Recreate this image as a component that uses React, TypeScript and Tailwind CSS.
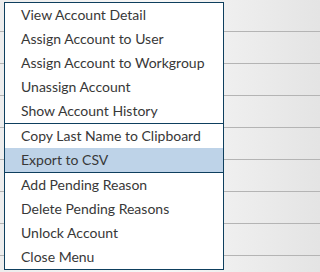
import React from 'react'

const groups: string[][] = [
  [
    'View Account Detail',
    'Assign Account to User',
    'Assign Account to Workgroup',
    'Unassign Account',
    'Show Account History',
  ],
  ['Copy Last Name to Clipboard', 'Export to CSV'],
  ['Add Pending Reason', 'Delete Pending Reasons', 'Unlock Account', 'Close Menu'],
]

const ACTIVE = 'Export to CSV'

export default function App() {
  return (
    <div className="relative w-full min-w-[229px] h-[272px] overflow-hidden bg-[#f3f3f3] font-['Lato',sans-serif]">
      {/* table rows behind the menu */}
      <div className="flex flex-col">
        {Array.from({ length: 9 }).map((_, i) => (
          <div
            key={i}
            className="h-[32px] border-b border-[#b4b4b4] bg-gradient-to-r from-[#ededed] via-[#f7f7f7] to-[#e4e4e4]"
          />
        ))}
      </div>

      {/* context menu */}
      <div className="absolute left-[4px] top-[2px] w-[220px] border border-[#0e3f5e] bg-white text-[14px] leading-[23px] text-[#383838]">
        {groups.map((g, gi) => (
          <div key={gi} className={gi > 0 ? 'border-t border-[#0e3f5e]' : ''}>
            {g.map((label) => (
              <div
                key={label}
                className={`h-[24px] pl-[16px] whitespace-nowrap ${label === ACTIVE ? 'bg-[#bed3e8]' : ''}`}
              >
                {label}
              </div>
            ))}
          </div>
        ))}
      </div>
    </div>
  )
}
